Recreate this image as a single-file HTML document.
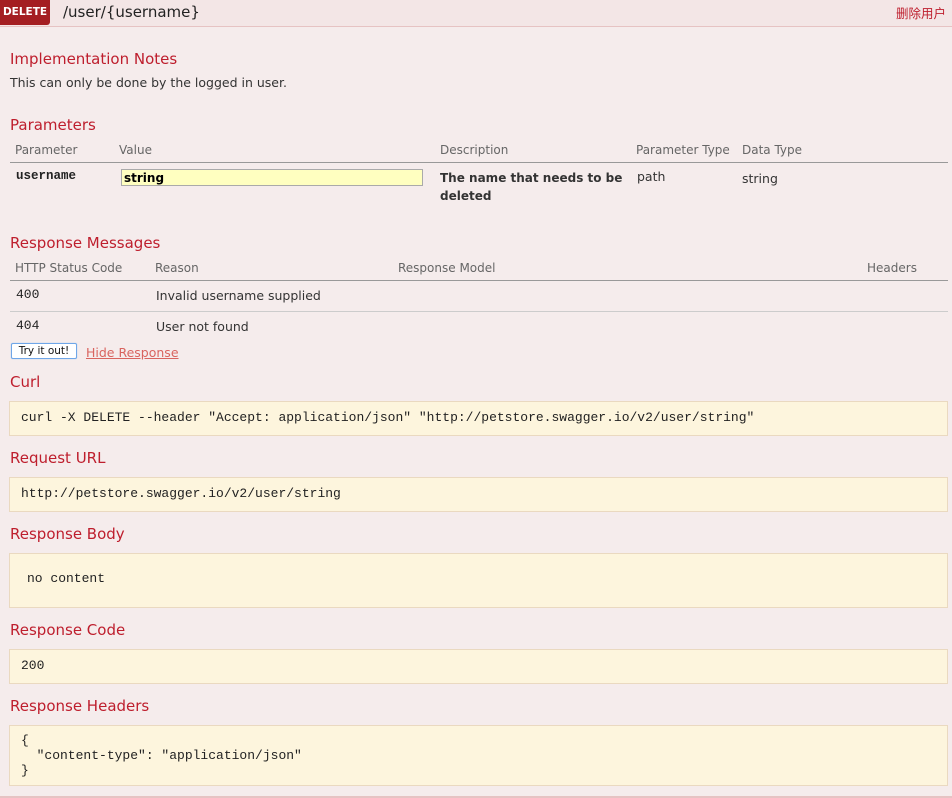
<!DOCTYPE html>
<html><head><meta charset="utf-8"><style>
body{margin:0;width:952px;height:798px;background:#f5ecec;font-family:"DejaVu Sans","Liberation Sans",sans-serif;position:relative;overflow:hidden;color:#333}
.a{position:absolute;white-space:nowrap}
.h{color:#be1e2d;font-size:15px;font-family:"DejaVu Sans",sans-serif}
.s{font-size:12.5px}
.th{font-size:12px;color:#666}
.mono{font-family:"Liberation Mono","DejaVu Sans Mono",monospace;font-size:13px;color:#222}
.box{position:absolute;left:9px;width:937px;background:#fdf5dd;border:1px solid #ead9c0}
.line{position:absolute;height:1px;background:#999}
</style></head><body>
<div class="a" style="left:0;top:0;width:952px;height:26px;background:#f3e6e6;border-bottom:1px solid #e6c3c3"></div>
<div class="a" style="left:0;top:0;width:50px;height:25px;background:#a41e22;border-radius:0 0 3px 0;color:#fff;font-weight:bold;font-size:10.5px;line-height:25px;text-align:center">DELETE</div>
<div class="a" style="left:63px;top:3px;font-size:15px;color:#222">/user/{username}</div>
<div class="a" style="right:6px;top:3px;font-size:12.5px;color:#be1e2d;font-family:'Noto Sans CJK SC',sans-serif">删除用户</div>

<div class="a h" style="left:10px;top:50px">Implementation Notes</div>
<div class="a s" style="left:10px;top:75px">This can only be done by the logged in user.</div>

<div class="a h" style="left:10px;top:116px">Parameters</div>
<div class="a th" style="left:15px;top:143px">Parameter</div>
<div class="a th" style="left:119px;top:143px">Value</div>
<div class="a th" style="left:440px;top:143px">Description</div>
<div class="a th" style="left:636px;top:143px">Parameter Type</div>
<div class="a th" style="left:742px;top:143px">Data Type</div>
<div class="line" style="left:10px;top:162px;width:938px"></div>
<div class="a mono" style="left:16px;top:169px;font-weight:bold;font-size:12.5px">username</div>
<div class="a" style="left:121px;top:169px;width:302px;height:17px;background:#ffffc0;border:1px solid #aaa;font-size:12px;font-weight:bold;line-height:17px;padding-left:2px;box-sizing:border-box;color:#000">string</div>
<div class="a" style="left:440px;top:169px;font-size:12px;font-weight:bold;line-height:18px">The name that needs to be<br>deleted</div>
<div class="a s" style="left:637px;top:169px">path</div>
<div class="a s" style="left:742px;top:171px">string</div>

<div class="a h" style="left:10px;top:234px">Response Messages</div>
<div class="a th" style="left:15px;top:261px">HTTP Status Code</div>
<div class="a th" style="left:155px;top:261px">Reason</div>
<div class="a th" style="left:398px;top:261px">Response Model</div>
<div class="a th" style="left:867px;top:261px">Headers</div>
<div class="line" style="left:10px;top:280px;width:938px"></div>
<div class="a mono" style="left:16px;top:287px">400</div>
<div class="a s" style="left:156px;top:288px">Invalid username supplied</div>
<div class="line" style="left:10px;top:311px;width:938px;background:#ccc"></div>
<div class="a mono" style="left:16px;top:318px">404</div>
<div class="a s" style="left:156px;top:319px">User not found</div>
<div class="a" style="left:11px;top:343px;width:64px;height:14px;background:#fff;border:1px solid #6fa6e8;box-shadow:0 0 1px #9cc4f0;border-radius:2px;font-size:10.5px;line-height:14px;text-align:center;color:#111">Try it out!</div>
<div class="a" style="left:86px;top:345px;font-size:12.5px;color:#d9645f;text-decoration:underline">Hide Response</div>

<div class="a h" style="left:10px;top:373px">Curl</div>
<div class="box" style="top:401px;height:33px"></div>
<div class="a mono" style="left:21px;top:410px">curl -X DELETE --header "Accept: application/json" "http://petstore.swagger.io/v2/user/string"</div>

<div class="a h" style="left:10px;top:449px">Request URL</div>
<div class="box" style="top:477px;height:33px"></div>
<div class="a mono" style="left:21px;top:486px">http://petstore.swagger.io/v2/user/string</div>

<div class="a h" style="left:10px;top:525px">Response Body</div>
<div class="box" style="top:553px;height:53px"></div>
<div class="a mono" style="left:27px;top:571px">no content</div>

<div class="a h" style="left:10px;top:621px">Response Code</div>
<div class="box" style="top:649px;height:33px"></div>
<div class="a mono" style="left:21px;top:658px">200</div>

<div class="a h" style="left:10px;top:697px">Response Headers</div>
<div class="box" style="top:725px;height:59px"></div>
<div class="a mono" style="left:21px;top:733px;line-height:15px">{<br>&nbsp;&nbsp;"content-type": "application/json"<br>}</div>
<div class="a" style="left:0;top:796px;width:952px;height:2px;background:#e6c3c3"></div>
</body></html>
